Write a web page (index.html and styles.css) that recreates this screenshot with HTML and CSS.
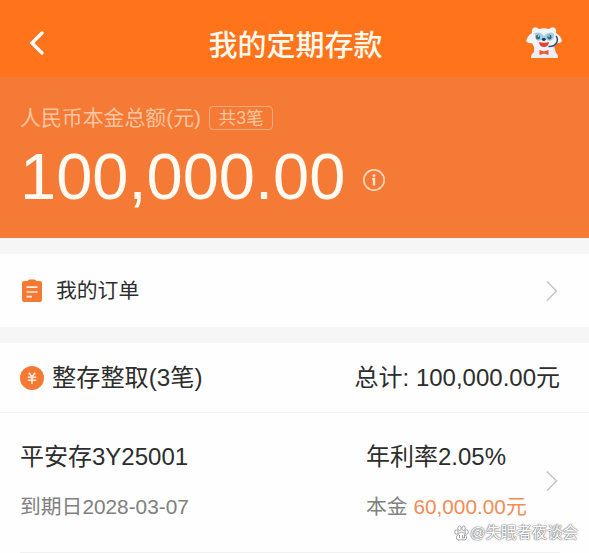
FILE: index.html
```html
<!DOCTYPE html>
<html lang="zh-CN">
<head>
<meta charset="utf-8">
<title>我的定期存款</title>
<link rel="stylesheet" href="styles.css">
</head>
<body>
<header class="nav">
  <svg class="back" width="18" height="28" viewBox="0 0 18 28"><path d="M14 4 4 14l10 10" fill="none" stroke="#fff" stroke-width="3.4" stroke-linecap="round"/></svg>
  <h1 class="title">我的定期存款</h1>
  <svg class="mascot" width="38" height="34" viewBox="0 0 38 34">
    <path d="M9 20h20l2 7q2 1 2 5H6q0-4 3-6z" fill="#eeeef2"/>
    <path d="M8 2q3-2 6 1 5-1.500 10 0 3-3 6-1 2 2 1 5 5 3 6 8-2 3-6 2-2 7-12 7.500Q9 24 7 17q-4 1-6-2 2-6 6-8-1-3 1-5z" fill="#f2f4f8"/>
    <path d="M8 8q5-3 9 0l2 2 2-2q5-3 8 0 1 5-4 7-3 0-6-3-3 3-6 3-4-2-3-7z" fill="#9bd0e8"/>
    <ellipse cx="13" cy="11" rx="2.200" ry="2.600" fill="#466575"/><ellipse cx="24.500" cy="11" rx="2.200" ry="2.600" fill="#466575"/>
    <circle cx="13.500" cy="10" r=".8" fill="#fff"/><circle cx="24" cy="10" r=".8" fill="#fff"/>
    <ellipse cx="18.800" cy="13.500" rx="2" ry="1.400" fill="#26333d"/>
    <path d="M14 16q5 1.500 10 0-.5 5-5 5t-5-5z" fill="#df4437"/>
    <path d="M31 10q2.500 3 .5 7-3 4-8 3.500" fill="none" stroke="#344e78" stroke-width="1.500"/>
    <path d="m14.500 24 4.500 1.500 4.500-1.500v5L19 27.500 14.500 29z" fill="#f05532"/>
  </svg>
</header>
<section class="summary">
  <div class="label-row"><span class="label">人民币本金总额(元)</span><span class="tag">共3笔</span></div>
  <div class="amount-row">
    <span class="amount">100,000.00</span>
    <svg class="info" width="24" height="24" viewBox="0 0 24 24"><circle cx="12" cy="12" r="10.200" fill="none" stroke="#ffd6bd" stroke-width="1.700"/><circle cx="12" cy="7.400" r="1.500" fill="#ffe3d1"/><path d="M10.300 11H12v6.500" fill="none" stroke="#ffe3d1" stroke-width="2.400"/></svg>
  </div>
</section>
<a class="orders">
  <svg width="24" height="26" viewBox="0 0 24 26"><path d="M4 3h3.500q.5-1.500 2-1.500h5q1.500 0 2 1.500H20q2 0 2 2v17q0 2-2 2H4q-2 0-2-2V5q0-2 2-2z" fill="#f47933"/><path d="M6.500 9.200h11M6.500 14h11M6.500 18.600h5.500" stroke="#ffede2" stroke-width="1.700"/></svg>
  <span class="orders-text">我的订单</span>
  <svg class="arrow" width="14" height="22" viewBox="0 0 14 22"><path d="m2 1.500 9.500 9.500L2 20.500" fill="none" stroke="#c4c4c4" stroke-width="1.500"/></svg>
</a>
<section class="deposits">
  <div class="group">
    <svg width="24" height="24" viewBox="0 0 24 24"><circle cx="12" cy="12" r="12" fill="#f47933"/><path d="m8.800 6.800 3.200 4 3.200-4M12 10.500v7.300M7.800 11.200h8.400M7.800 14.200h8.400" fill="none" stroke="#ffeee5" stroke-width="1.600"/></svg>
    <h2 class="group-name">整存整取(3笔)</h2>
    <span class="total">总计: 100,000.00元</span>
  </div>
  <div class="item">
    <div class="item-left"><div class="main">平安存3Y25001</div><div class="sub">到期日2028-03-07</div></div>
    <div class="item-right"><div class="main">年利率2.05%</div><div class="sub">本金 <span class="money">60,000.00元</span></div></div>
    <svg class="arrow" width="14" height="22" viewBox="0 0 14 22"><path d="m2 1.500 9.500 9.500L2 20.500" fill="none" stroke="#c4c4c4" stroke-width="1.500"/></svg>
  </div>
</section>
<div class="watermark">
  <svg width="15" height="16" viewBox="0 0 15 16"><g fill="#fff" stroke="#999" stroke-width=".9"><ellipse cx="2.500" cy="7" rx="1.700" ry="2.200"/><ellipse cx="5.500" cy="3.200" rx="1.700" ry="2.300"/><ellipse cx="9.600" cy="3.200" rx="1.700" ry="2.300"/><ellipse cx="12.600" cy="7" rx="1.700" ry="2.200"/><path d="M7.500 7q2 0 3 2l2 2.500q1 3-2 3.500-3-.6-6 0-3-.5-2-3.500l2-2.500q1-2 3-2z"/></g><path d="M5.500 10v3M8.500 10v3h2v-3" fill="none" stroke="#999"/></svg>
  <span>@失眠者夜谈会</span>
</div>
</body>
</html>
```
FILE: styles.css
```css
* { box-sizing: border-box; }
body {
  margin: 0;
  height: 553px;
  overflow: hidden;
  position: relative;
  background: #f6f6f6;
  color: #2d2d2d;
  font-family: "Liberation Sans", "Noto Sans CJK SC", sans-serif;
}
svg { display: block; flex: none; }
h1, h2 { margin: 0; font-weight: 400; }
.nav {
  height: 77px;
  padding: 9px 26px 0 28px;
  display: grid;
  grid-template-columns: 38px 1fr 38px;
  align-items: center;
  background: #ff731b;
}
.title {
  text-align: center;
  color: #fff8ed;
  font-size: 29px;
  line-height: 40px;
  font-weight: 500;
  font-family: "Noto Sans CJK SC", sans-serif;
}
.summary {
  height: 161px;
  padding: 26px 20px 0;
  background: #f47a35;
}
.label-row { display: flex; align-items: center; gap: 8px; height: 30px; }
.label { font-size: 20.9px; line-height: 30px; color: #ffc5a1; }
.tag {
  width: 64px;
  height: 24px;
  border: 1px solid #f9aa7c;
  border-radius: 4px;
  text-align: center;
  font-size: 17.6px;
  line-height: 22px;
  color: #ffc5a1;
}
.amount-row { display: flex; align-items: center; gap: 17px; height: 88px; }
.amount { font-size: 65px; line-height: 88px; color: #fffaf2; }
.info { margin-top: 5px; }
.orders {
  height: 73px;
  margin: 16px 0;
  padding: 0 30px 0 20px;
  display: flex;
  align-items: center;
  background: #fefefe;
}
.orders-text { margin-left: 12px; font-size: 20.8px; line-height: 30px; }
.arrow { margin-left: auto; }
.deposits { background: #fefefe; height: 210px; }
.group {
  height: 70px;
  padding: 0 29px 0 20px;
  display: flex;
  align-items: center;
  border-bottom: 1px solid #f3f3f3;
}
.group-name { margin-left: 8px; font-size: 24.2px; line-height: 36px; }
.total { margin-left: auto; font-size: 24px; line-height: 36px; }
.item {
  height: 140px;
  margin: 0 29px 0 20px;
  padding: 26px 1px 0 0;
  display: flex;
  border-bottom: 1px solid #f1f1f1;
}
.item-left { width: 346px; }
.item .arrow { margin-top: 31px; }
.main { font-size: 24px; line-height: 36px; }
.sub { margin-top: 17px; font-size: 20.8px; line-height: 30px; color: #808080; }
.money { color: #f38b56; }
.watermark {
  position: absolute;
  right: 11px;
  bottom: 9px;
  display: flex;
  align-items: center;
  gap: 1px;
  font-size: 15.4px;
  line-height: 22px;
  color: #fff;
  text-shadow: 0 0 1px #777, 0 0 1px #777, 0 0 2px #888;
}
```
